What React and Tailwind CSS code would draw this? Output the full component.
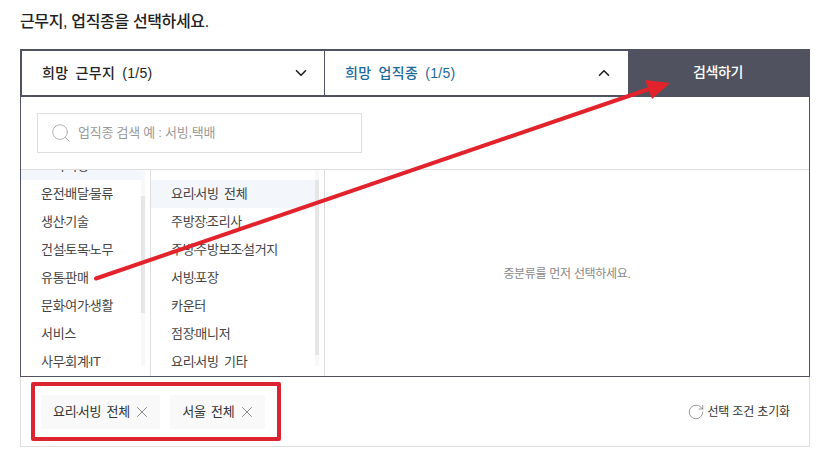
import { ChevronDown, ChevronUp, RotateCw, Search, X } from 'lucide-react';

const font = { fontFamily: '"Liberation Sans", "Noto Sans CJK KR", sans-serif' };

const categories = ['요리·서빙', '운전·배달·물류', '생산·기술', '건설·토목·노무', '유통·판매', '문화·여가·생활', '서비스', '사무·회계·IT'];
const jobs = ['요리·서빙 전체', '주방장·조리사', '주방·주방보조·설거지', '서빙·포장', '카운터', '점장·매니저', '요리·서빙 기타'];

// the middle dot sits almost without width between the words
function Dotted({ text }) {
    return text.split('·').map((part, i) => (
        <span key={i}>
            {i > 0 && <span className="-mx-[1.5px]">·</span>}
            {part}
        </span>
    ));
}

function Chip({ label }) {
    return (
        <span className="flex h-[34px] items-center gap-[3px] bg-[#f9f9f9] pl-3 pr-[9px] text-[13px] tracking-[-0.2px] [word-spacing:2px] text-[#333]">
            <span><Dotted text={label} /></span>
            <X size={18} strokeWidth={0.9} className="text-[#555]" />
        </span>
    );
}

function Scrollbar({ top, height }) {
    return (
        <div className="mb-[10px] w-1 shrink-0 self-stretch bg-[#f8f8f8]">
            <div className="w-1 bg-[#e6e6e6]" style={{ marginTop: top, height }}></div>
        </div>
    );
}

function Row({ text, active }) {
    return (
        <div className={`flex h-[28px] items-center pl-5 text-[13px] tracking-[-0.3px] [word-spacing:2px] text-[#444] ${active ? 'bg-[#f3f6fa]' : ''}`}>
            <span><Dotted text={text} /></span>
        </div>
    );
}

export default function App() {
    return (
        <div style={font} className="relative h-[472px] w-[829px] overflow-hidden bg-white px-5">
            <h1 className="flex h-[49px] items-start pt-[10px] text-[16px] leading-6 font-medium tracking-[-0.35px] text-[#222]">
                근무지, 업직종을 선택하세요.
            </h1>

            {/* Tabs */}
            <div className="flex h-12 w-[790px]">
                <div className="flex w-[304px] items-center justify-between border-2 border-r-0 border-[#50535f] pl-[20px] pr-[14px] text-[14px] font-medium tracking-[0.3px] [word-spacing:3px] text-[#222]">
                    <span className="pt-[1px]">희망 근무지 (1/5)</span>
                    <ChevronDown size={18} strokeWidth={2.2} className="text-[#222]" />
                </div>
                <div className="flex w-[304px] items-center justify-between border-y-2 border-l border-[#50535f] pl-[20px] pr-[15px] text-[14px] font-medium tracking-[0.3px] [word-spacing:3px] text-[#1b6a9c]">
                    <span className="pt-[1px]">희망 업직종 (1/5)</span>
                    <ChevronUp size={18} strokeWidth={2.2} className="text-[#222]" />
                </div>
                <button className="flex w-[182px] items-center justify-center bg-[#50535f] pb-[2px] pr-[2px] text-[14px] font-medium tracking-[-0.4px] text-white">
                    검색하기
                </button>
            </div>

            {/* Panel */}
            <div className="h-[280px] w-[790px] border-x border-b border-[#50535f]">
                <div className="flex h-[73px] items-start border-b border-[#dedede] pl-4 pt-4">
                    <div className="flex h-10 w-[325px] items-center gap-[6px] border border-[#dedede] pl-[12px] text-[13px] tracking-[-0.25px] text-[#999]">
                        <Search size={22} strokeWidth={1} className="text-[#aaa]" />
                        업직종 검색 예 : 서빙,택배
                    </div>
                </div>
                <div className="flex h-[206px]">
                    <div className="flex w-[130px] overflow-hidden border-r border-[#dedede]">
                        <div className="-mt-[18px] flex-1">
                            {categories.map((c, i) => (
                                <Row key={c} text={c} active={i === 0} />
                            ))}
                        </div>
                        <Scrollbar top={26} height={117} />
                        <div className="w-[5px]"></div>
                    </div>
                    <div className="flex w-[174px] overflow-hidden border-r border-[#dedede]">
                        <div className="mt-[10px] flex-1">
                            {jobs.map((j, i) => (
                                <Row key={j} text={j} active={i === 0} />
                            ))}
                        </div>
                        <Scrollbar top={10} height={175} />
                        <div className="w-[5px]"></div>
                    </div>
                    <div className="flex flex-1 items-center justify-center pt-[2px] text-[12px] tracking-[-0.3px] text-[#888]">
                        중분류를 먼저 선택하세요.
                    </div>
                </div>
            </div>

            {/* Selected conditions */}
            <div className="flex h-[70px] w-[790px] items-center justify-between border-x border-b border-[#dedede] pl-5 pr-[19px] pt-[1px]">
                <div className="flex gap-[10px]">
                    <Chip label="요리·서빙 전체" />
                    <Chip label="서울 전체" />
                </div>
                <div className="flex items-center gap-[2px] text-[12px] tracking-[-0.15px] text-[#333]">
                    <RotateCw size={18} strokeWidth={1} className="text-[#777]" />
                    선택 조건 초기화
                </div>
            </div>

            {/* Red annotations */}
            <div className="absolute top-[382px] left-[31px] h-[59px] w-[250px] rounded-[2px] border-4 border-[#dc2430]"></div>
            <svg className="absolute top-0 left-0" width="829" height="472" viewBox="0 0 829 472" fill="none">
                <path d="M96 278.5L652 88" stroke="#e2232c" strokeWidth="4" strokeLinecap="round" />
                <polygon points="670,83 645,80 652,99" fill="#e2232c" />
            </svg>
        </div>
    );
}
